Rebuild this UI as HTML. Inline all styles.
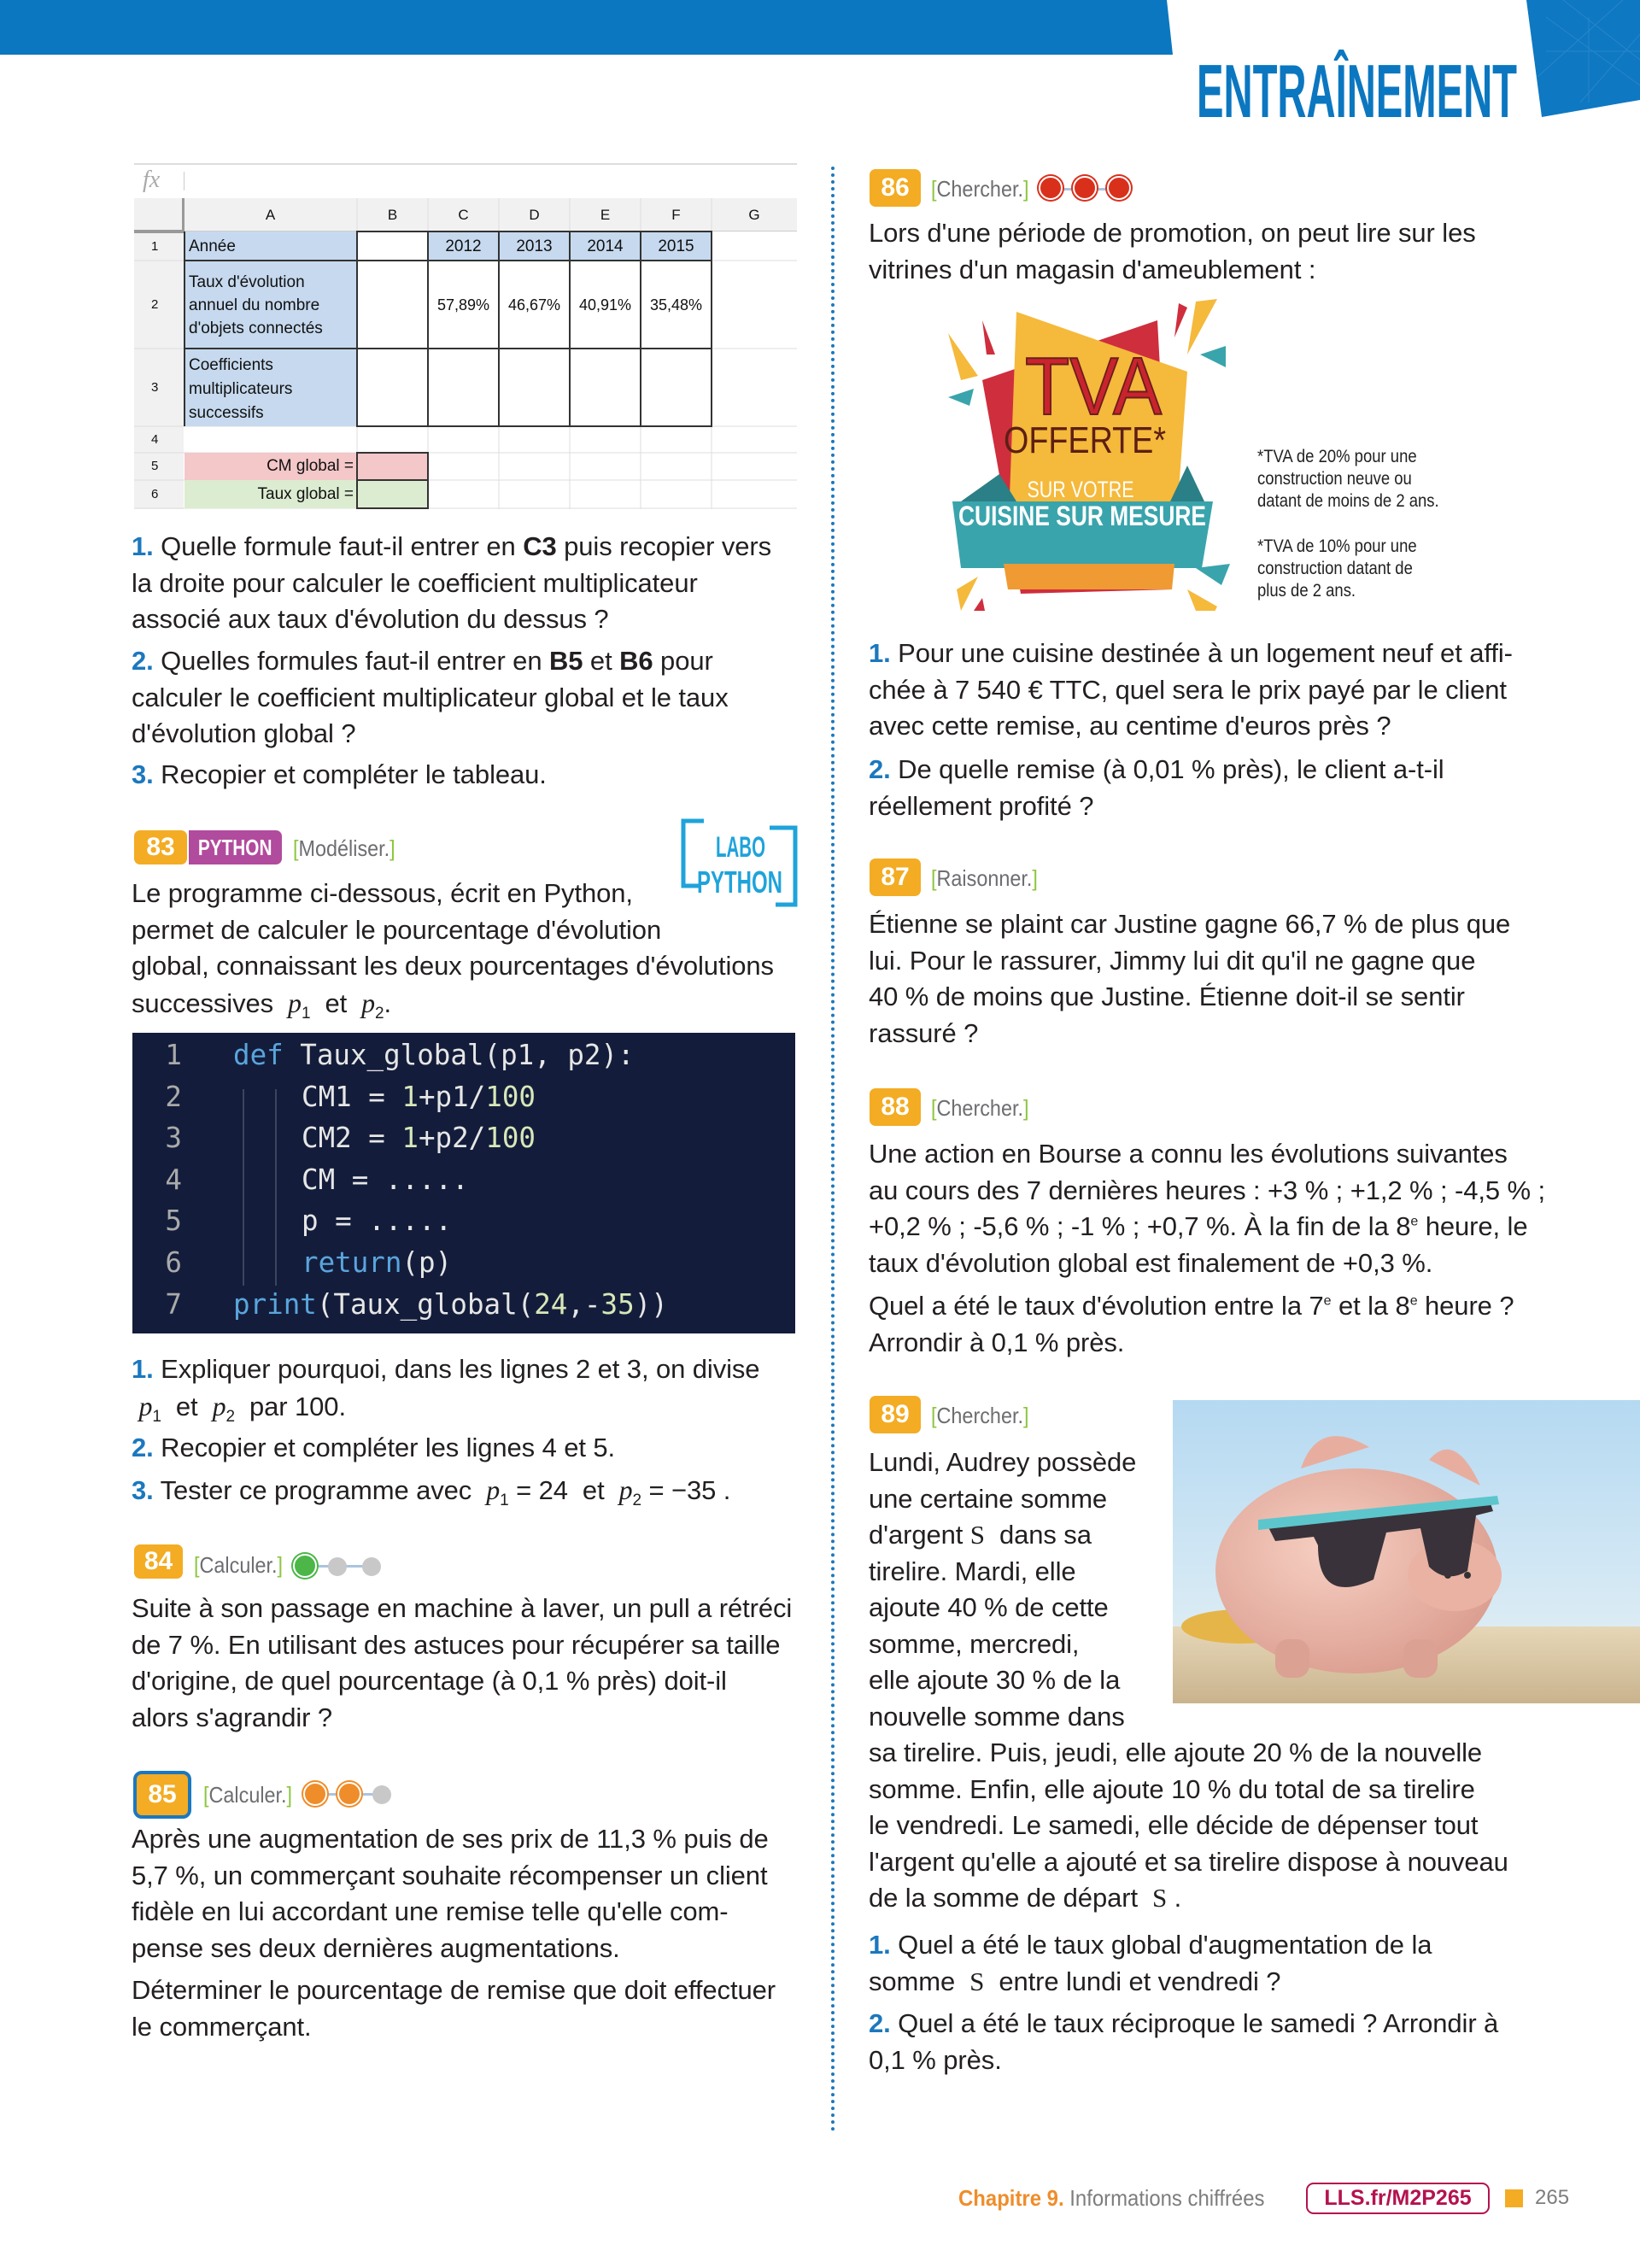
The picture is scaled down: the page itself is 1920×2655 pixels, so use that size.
<!DOCTYPE html>
<html><head><meta charset="utf-8">
<style>
*{margin:0;padding:0;box-sizing:border-box}
body{width:1920px;height:2655px;position:relative;background:#fff;font-family:"Liberation Sans",sans-serif;color:#231f20;overflow:hidden}
.a{position:absolute;white-space:nowrap}
.t{position:absolute;white-space:nowrap;font-size:31px;line-height:42.5px;letter-spacing:-0.1px}
.n{color:#1b78be;font-weight:bold}
.badge{position:absolute;background:#f3ac23;color:#fff;font-weight:bold;font-size:30px;border-radius:7px;text-align:center;line-height:40px;height:40px}
.tag{position:absolute;font-size:26px;color:#6d6e71;transform:scaleX(.9);transform-origin:left center;white-space:nowrap;line-height:30px}
.tag b{color:#8cc63f;font-weight:normal}
.dot{position:absolute;border-radius:50%}
i.m{font-family:"Liberation Serif",serif;font-style:italic;font-size:32px}
sub{font-size:19px}
.cell{position:absolute;font-size:19px;line-height:22px;color:#111}
</style></head><body>

<svg class="a" style="left:0;top:0" width="1920" height="140">
<polygon points="0,0 1366,0 1373,64 0,64" fill="#0b77c0"/>
<polygon points="1787,0 1920,0 1920,117 1805,137" fill="#0e78c2"/>
<g stroke="#3a90cf" stroke-width="1" opacity=".6" fill="none">
<path d="M1810,20 L1920,100 M1830,0 L1920,70 M1800,90 L1900,0 M1850,120 L1920,40 M1860,20 L1860,120 M1810,60 L1920,60"/>
</g>
<text x="1401" y="137" font-family="Liberation Sans" font-weight="bold" font-size="88" fill="#0b77c0" textLength="375" lengthAdjust="spacingAndGlyphs">ENTRAÎNEMENT</text>
</svg>

<div class="a" style="left:973px;top:195px;height:2302px;border-left:4px dotted #1b78be"></div>

<div class="a" style="left:157px;top:191px;width:776px;height:405px;background:#fff">
 <div class="a" style="left:0;top:0;width:776px;height:2px;background:#ddd"></div>
 <div class="a" style="left:10px;top:4px;font-family:'Liberation Serif',serif;font-style:italic;font-size:28px;color:#aaa">fx</div>
 <div class="a" style="left:58px;top:10px;width:1px;height:22px;background:#ccc"></div>
 <div class="a" style="left:0;top:41px;width:776px;height:39px;background:#f1f1f1;border-bottom:1px solid #ccc"></div>
 <div class="a" style="left:0;top:41px;width:58px;height:364px;background:#f1f1f1"></div>
 <div class="a" style="left:0;top:78px;width:58px;height:4px;background:#999"></div>
 <div class="a" style="left:56px;top:41px;width:3px;height:39px;background:#999"></div>
 <div class="cell" style="left:58px;top:50px;width:203px;text-align:center;font-size:17px">A</div>
 <div class="cell" style="left:261px;top:50px;width:83px;text-align:center;font-size:17px">B</div>
 <div class="cell" style="left:344px;top:50px;width:83px;text-align:center;font-size:17px">C</div>
 <div class="cell" style="left:427px;top:50px;width:83px;text-align:center;font-size:17px">D</div>
 <div class="cell" style="left:510px;top:50px;width:83px;text-align:center;font-size:17px">E</div>
 <div class="cell" style="left:593px;top:50px;width:83px;text-align:center;font-size:17px">F</div>
 <div class="cell" style="left:676px;top:50px;width:100px;text-align:center;font-size:17px">G</div>
 <svg class="a" style="left:0;top:0" width="776" height="405">
  <g stroke="#ddd" stroke-width="1">
   <line x1="0" y1="114" x2="776" y2="114"/><line x1="0" y1="217" x2="776" y2="217"/><line x1="0" y1="308" x2="776" y2="308"/><line x1="0" y1="339" x2="776" y2="339"/><line x1="0" y1="371" x2="776" y2="371"/><line x1="0" y1="404" x2="776" y2="404"/>
   <line x1="261" y1="41" x2="261" y2="405"/><line x1="344" y1="41" x2="344" y2="405"/><line x1="427" y1="41" x2="427" y2="405"/><line x1="510" y1="41" x2="510" y2="405"/><line x1="593" y1="41" x2="593" y2="405"/><line x1="676" y1="41" x2="676" y2="405"/>
  </g>
  <rect x="59" y="80" width="202" height="228" fill="#c6d9ee"/>
  <rect x="344" y="80" width="332" height="34" fill="#c6d9ee"/>
  <rect x="59" y="339" width="285" height="32" fill="#f4c7c9"/>
  <rect x="59" y="371" width="285" height="33" fill="#dcecd1"/>
  <g stroke="#333" stroke-width="2" fill="none">
   <rect x="261" y="80" width="415" height="228"/>
   <line x1="59" y1="114" x2="676" y2="114"/><line x1="59" y1="217" x2="676" y2="217"/>
   <line x1="344" y1="80" x2="344" y2="308"/><line x1="427" y1="80" x2="427" y2="308"/><line x1="510" y1="80" x2="510" y2="308"/><line x1="593" y1="80" x2="593" y2="308"/>
   <line x1="59" y1="80" x2="59" y2="308"/>
   <rect x="261" y="339" width="83" height="65"/><line x1="261" y1="371" x2="344" y2="371"/>
  </g>
 </svg>
 <div class="cell" style="left:20px;top:87px;font-size:15px">1</div>
 <div class="cell" style="left:20px;top:155px;font-size:15px">2</div>
 <div class="cell" style="left:20px;top:252px;font-size:15px">3</div>
 <div class="cell" style="left:20px;top:313px;font-size:15px">4</div>
 <div class="cell" style="left:20px;top:344px;font-size:15px">5</div>
 <div class="cell" style="left:20px;top:377px;font-size:15px">6</div>
 <div class="cell" style="left:64px;top:87px">Année</div>
 <div class="cell" style="left:64px;top:126px;line-height:27px">Taux d'évolution<br>annuel du nombre<br>d'objets connectés</div>
 <div class="cell" style="left:64px;top:223px;line-height:28px">Coefficients<br>multiplicateurs<br>successifs</div>
 <div class="cell" style="left:344px;top:87px;width:83px;text-align:center">2012</div>
 <div class="cell" style="left:427px;top:87px;width:83px;text-align:center">2013</div>
 <div class="cell" style="left:510px;top:87px;width:83px;text-align:center">2014</div>
 <div class="cell" style="left:593px;top:87px;width:83px;text-align:center">2015</div>
 <div class="cell" style="left:344px;top:155px;width:83px;text-align:center;font-size:18px">57,89%</div>
 <div class="cell" style="left:427px;top:155px;width:83px;text-align:center;font-size:18px">46,67%</div>
 <div class="cell" style="left:510px;top:155px;width:83px;text-align:center;font-size:18px">40,91%</div>
 <div class="cell" style="left:593px;top:155px;width:83px;text-align:center;font-size:18px">35,48%</div>
 <div class="cell" style="left:59px;top:344px;width:198px;text-align:right">CM global =</div>
 <div class="cell" style="left:59px;top:377px;width:198px;text-align:right">Taux global =</div>
</div>

<div class="t" style="left:154px;top:619px"><span class="n">1.</span> Quelle formule faut-il entrer en <b>C3</b> puis recopier vers<br>la droite pour calculer le coefficient multiplicateur<br>associé aux taux d'évolution du dessus ?</div>
<div class="t" style="left:154px;top:753px"><span class="n">2.</span> Quelles formules faut-il entrer en <b>B5</b> et <b>B6</b> pour<br>calculer le coefficient multiplicateur global et le taux<br>d'évolution global ?</div>
<div class="t" style="left:154px;top:886px"><span class="n">3.</span> Recopier et compléter le tableau.</div>

<div class="badge" style="left:157px;top:972px;width:62px">83</div>
<div class="a" style="left:221px;top:972px;width:109px;height:40px;background:#b14b9d;border-radius:0 7px 7px 0;color:#fff;font-weight:bold;font-size:26px;line-height:40px;text-align:center"><span style="display:inline-block;transform:scaleX(.8)">PYTHON</span></div>
<div class="tag" style="left:343px;top:978px"><b>[</b>Modéliser.<b>]</b></div>
<svg class="a" style="left:796px;top:957px" width="140" height="106">
 <path d="M28,4 H4 V80 H24" fill="none" stroke="#1fa3da" stroke-width="5"/>
 <path d="M105,12 H135 V102 H112" fill="none" stroke="#1fa3da" stroke-width="5"/>
 <text x="71" y="46" text-anchor="middle" font-family="Liberation Sans" font-weight="bold" font-size="34" fill="#1fa3da" textLength="58" lengthAdjust="spacingAndGlyphs">LABO</text>
 <text x="70" y="88" text-anchor="middle" font-family="Liberation Sans" font-weight="bold" font-size="36" fill="#1fa3da" textLength="100" lengthAdjust="spacingAndGlyphs">PYTHON</text>
</svg>
<div class="t" style="left:154px;top:1025px">Le programme ci-dessous, écrit en Python,<br>permet de calculer le pourcentage d'évolution<br>global, connaissant les deux pourcentages d'évolutions<br>successives&nbsp; <i class="m">p</i><sub>1</sub>&nbsp; et&nbsp; <i class="m">p</i><sub>2</sub>.</div>

<div class="a" style="left:155px;top:1209px;width:776px;height:352px;background:#131d3b"></div>
<div class="a" style="left:284px;top:1275px;width:2px;height:230px;background:#3a4560"></div>
<div class="a" style="left:322px;top:1275px;width:2px;height:230px;background:#3a4560"></div>
<div class="a" style="left:155px;top:1209px;font-family:'DejaVu Sans Mono','Liberation Mono',monospace;font-size:32.5px;line-height:48.6px;color:#e6e6e6;padding-top:2px">
<div><span style="display:inline-block;width:58px;text-align:right;color:#aaa">1</span><span style="padding-left:60px"><span style="color:#5aa5dd">def</span> Taux_global(p1, p2):</span></div>
<div><span style="display:inline-block;width:58px;text-align:right;color:#aaa">2</span><span style="padding-left:140px">CM1 = <span style="color:#d8e7b8">1</span>+p1/<span style="color:#d8e7b8">100</span></span></div>
<div><span style="display:inline-block;width:58px;text-align:right;color:#aaa">3</span><span style="padding-left:140px">CM2 = <span style="color:#d8e7b8">1</span>+p2/<span style="color:#d8e7b8">100</span></span></div>
<div><span style="display:inline-block;width:58px;text-align:right;color:#aaa">4</span><span style="padding-left:140px">CM = .....</span></div>
<div><span style="display:inline-block;width:58px;text-align:right;color:#aaa">5</span><span style="padding-left:140px">p = .....</span></div>
<div><span style="display:inline-block;width:58px;text-align:right;color:#aaa">6</span><span style="padding-left:140px"><span style="color:#5aa5dd">return</span>(p)</span></div>
<div><span style="display:inline-block;width:58px;text-align:right;color:#aaa">7</span><span style="padding-left:60px"><span style="color:#5aa5dd">print</span>(Taux_global(<span style="color:#d8e7b8">24</span>,-<span style="color:#d8e7b8">35</span>))</span></div>
</div>

<div class="t" style="left:154px;top:1582px"><span class="n">1.</span> Expliquer pourquoi, dans les lignes 2 et 3, on divise<br>&nbsp;<i class="m">p</i><sub>1</sub>&nbsp; et&nbsp; <i class="m">p</i><sub>2</sub>&nbsp; par 100.</div>
<div class="t" style="left:154px;top:1674px"><span class="n">2.</span> Recopier et compléter les lignes 4 et 5.</div>
<div class="t" style="left:154px;top:1723px"><span class="n">3.</span> Tester ce programme avec&nbsp; <i class="m">p</i><sub>1</sub> = 24&nbsp; et&nbsp; <i class="m">p</i><sub>2</sub> = −35 .</div>

<div class="badge" style="left:157px;top:1808px;width:57px">84</div>
<div class="tag" style="left:227px;top:1817px"><b>[</b>Calculer.<b>]</b></div>
<div class="a" style="left:365px;top:1832px;width:80px;height:3px;background:#aac4de"></div>
<div class="dot" style="left:343px;top:1819px;width:28px;height:28px;background:#4cb648;border:2px solid #fff;box-shadow:0 0 0 2px #4cb648"></div>
<div class="dot" style="left:384px;top:1823px;width:22px;height:22px;background:#c8c8c8"></div>
<div class="dot" style="left:424px;top:1823px;width:22px;height:22px;background:#c8c8c8"></div>
<div class="t" style="left:154px;top:1862px">Suite à son passage en machine à laver, un pull a rétréci<br>de 7 %. En utilisant des astuces pour récupérer sa taille<br>d'origine, de quel pourcentage (à 0,1 % près) doit-il<br>alors s'agrandir ?</div>

<div class="badge" style="left:156px;top:2073px;width:68px;height:56px;line-height:48px;border:4px solid #1b78be;border-radius:10px">85</div>
<div class="tag" style="left:238px;top:2086px"><b>[</b>Calculer.<b>]</b></div>
<div class="a" style="left:375px;top:2099px;width:80px;height:3px;background:#aac4de"></div>
<div class="dot" style="left:355px;top:2086px;width:28px;height:28px;background:#ef8d2a;border:2px solid #fff;box-shadow:0 0 0 2px #ef8d2a"></div>
<div class="dot" style="left:395px;top:2086px;width:28px;height:28px;background:#ef8d2a;border:2px solid #fff;box-shadow:0 0 0 2px #ef8d2a"></div>
<div class="dot" style="left:436px;top:2090px;width:22px;height:22px;background:#c8c8c8"></div>
<div class="t" style="left:154px;top:2132px">Après une augmentation de ses prix de 11,3 % puis de<br>5,7 %, un commerçant souhaite récompenser un client<br>fidèle en lui accordant une remise telle qu'elle com-<br>pense ses deux dernières augmentations.</div>
<div class="t" style="left:154px;top:2309px">Déterminer le pourcentage de remise que doit effectuer<br>le commerçant.</div>

<div class="badge" style="left:1018px;top:198px;width:60px;height:44px;line-height:44px">86</div>
<div class="tag" style="left:1090px;top:206px"><b>[</b>Chercher.<b>]</b></div>
<div class="a" style="left:1230px;top:220px;width:80px;height:3px;background:#aac4de"></div>
<div class="dot" style="left:1216px;top:206px;width:28px;height:28px;background:#d9301c;border:2px solid #fff;box-shadow:0 0 0 2px #d9301c"></div>
<div class="dot" style="left:1256px;top:206px;width:28px;height:28px;background:#d9301c;border:2px solid #fff;box-shadow:0 0 0 2px #d9301c"></div>
<div class="dot" style="left:1296px;top:206px;width:28px;height:28px;background:#d9301c;border:2px solid #fff;box-shadow:0 0 0 2px #d9301c"></div>
<div class="t" style="left:1017px;top:252px">Lors d'une période de promotion, on peut lire sur les<br>vitrines d'un magasin d'ameublement :</div>

<svg class="a" style="left:1110px;top:345px" width="350" height="370">
 <polygon points="40,100 245,30 262,345 85,350" fill="#cf2e3d"/>
 <polygon points="80,20 280,90 265,300 70,290" fill="#f5b93b"/>
 <polygon points="5,242 310,242 297,320 15,320" fill="#3aa4ac"/>
 <polygon points="15,242 60,210 80,242" fill="#2b7f86"/>
 <polygon points="300,242 280,200 260,242" fill="#2b7f86"/>
 <polygon points="65,315 265,315 262,345 70,345" fill="#ef9a32"/>
 <polygon points="0,45 35,95 15,100" fill="#f5b93b"/>
 <polygon points="40,30 55,70 45,70" fill="#cf2e3d"/>
 <polygon points="0,120 30,110 25,130" fill="#3aa4ac"/>
 <polygon points="290,8 315,5 280,70" fill="#f5b93b"/>
 <polygon points="270,10 280,15 265,50" fill="#cf2e3d"/>
 <polygon points="295,70 325,60 325,85" fill="#3aa4ac"/>
 <polygon points="10,345 35,330 15,370" fill="#f5b93b"/>
 <polygon points="40,355 45,380 30,370" fill="#cf2e3d"/>
 <polygon points="280,345 315,365 300,395" fill="#f5b93b"/>
 <polygon points="290,320 330,315 320,340" fill="#3aa4ac"/>
 <text x="170" y="140" text-anchor="middle" font-family="Liberation Sans" font-size="96" fill="#c9242e" stroke="#6b1d1d" stroke-width="2" textLength="160" lengthAdjust="spacingAndGlyphs">TVA</text>
 <text x="160" y="185" text-anchor="middle" font-family="Liberation Sans" font-size="44" fill="#5d1f14" textLength="190" lengthAdjust="spacingAndGlyphs">OFFERTE*</text>
 <text x="155" y="237" text-anchor="middle" font-family="Liberation Sans" font-size="27" fill="#fff" textLength="125" lengthAdjust="spacingAndGlyphs">SUR VOTRE</text>
 <text x="157" y="270" text-anchor="middle" font-family="Liberation Sans" font-weight="bold" font-size="32" fill="#fff" textLength="290" lengthAdjust="spacingAndGlyphs">CUISINE SUR MESURE</text>
</svg>
<div class="a" style="left:1472px;top:522px;font-size:21px;line-height:26px;color:#222;transform:scaleX(.88);transform-origin:left top">*TVA de 20% pour une<br>construction neuve ou<br>datant de moins de 2 ans.</div>
<div class="a" style="left:1472px;top:627px;font-size:21px;line-height:26px;color:#222;transform:scaleX(.88);transform-origin:left top">*TVA de 10% pour une<br>construction datant de<br>plus de 2 ans.</div>

<div class="t" style="left:1017px;top:744px"><span class="n">1.</span> Pour une cuisine destinée à un logement neuf et affi-<br>chée à 7 540 € TTC, quel sera le prix payé par le client<br>avec cette remise, au centime d'euros près ?</div>
<div class="t" style="left:1017px;top:880px"><span class="n">2.</span> De quelle remise (à 0,01 % près), le client a-t-il<br>réellement profité ?</div>

<div class="badge" style="left:1018px;top:1005px;width:60px;height:44px;line-height:44px">87</div>
<div class="tag" style="left:1090px;top:1013px"><b>[</b>Raisonner.<b>]</b></div>
<div class="t" style="left:1017px;top:1061px">Étienne se plaint car Justine gagne 66,7 % de plus que<br>lui. Pour le rassurer, Jimmy lui dit qu'il ne gagne que<br>40 % de moins que Justine. Étienne doit-il se sentir<br>rassuré ?</div>

<div class="badge" style="left:1018px;top:1274px;width:60px;height:44px;line-height:44px">88</div>
<div class="tag" style="left:1090px;top:1282px"><b>[</b>Chercher.<b>]</b></div>
<div class="t" style="left:1017px;top:1330px">Une action en Bourse a connu les évolutions suivantes<br>au cours des 7 dernières heures : +3 % ; +1,2 % ; -4,5 % ;<br>+0,2 % ; -5,6 % ; -1 % ; +0,7 %. À la fin de la 8<sup style="font-size:16px;line-height:0">e</sup> heure, le<br>taux d'évolution global est finalement de +0,3 %.</div>
<div class="t" style="left:1017px;top:1508px">Quel a été le taux d'évolution entre la 7<sup style="font-size:16px;line-height:0">e</sup> et la 8<sup style="font-size:16px;line-height:0">e</sup> heure ?<br>Arrondir à 0,1 % près.</div>

<div class="badge" style="left:1018px;top:1634px;width:60px;height:44px;line-height:44px">89</div>
<div class="tag" style="left:1090px;top:1642px"><b>[</b>Chercher.<b>]</b></div>
<svg class="a" style="left:1373px;top:1639px" width="547" height="355">
 <defs>
  <linearGradient id="sky" x1="0" y1="0" x2="0" y2="1"><stop offset="0" stop-color="#b5d9f2"/><stop offset="1" stop-color="#e8f2f5"/></linearGradient>
  <linearGradient id="sand" x1="0" y1="0" x2="0" y2="1"><stop offset="0" stop-color="#e6d7b8"/><stop offset="1" stop-color="#c9b38d"/></linearGradient>
  <radialGradient id="pig" cx=".4" cy=".4" r=".7"><stop offset="0" stop-color="#f6cfc2"/><stop offset="1" stop-color="#d99a8c"/></radialGradient>
 </defs>
 <rect width="547" height="355" fill="url(#sky)"/>
 <rect y="265" width="547" height="90" fill="url(#sand)"/>
 <ellipse cx="80" cy="265" rx="70" ry="20" fill="#e5b54a"/>
 <ellipse cx="215" cy="200" rx="165" ry="120" fill="url(#pig)"/>
 <path d="M150,80 Q170,20 230,55" fill="#e7aea0"/>
 <path d="M300,70 Q330,35 360,100" fill="#e7aea0"/>
 <ellipse cx="330" cy="205" rx="55" ry="42" fill="#eab2a3"/>
 <circle cx="322" cy="205" r="4" fill="#333"/><circle cx="345" cy="205" r="4" fill="#333"/>
 <rect x="120" y="280" width="40" height="45" rx="15" fill="#dba193"/>
 <rect x="270" y="280" width="40" height="45" rx="15" fill="#dba193"/>
 <path d="M110,145 L370,115 L375,130 L355,135 L345,200 Q320,215 300,195 L290,150 L250,155 L235,210 Q170,240 170,170 L165,160 L120,165 Z" fill="#39323a"/>
 <path d="M100,140 L380,112 L382,122 L100,152 Z" fill="#5cc6cc"/>
</svg>
<div class="t" style="left:1017px;top:1691px">Lundi, Audrey possède<br>une certaine somme<br>d'argent <span style="font-family:'Liberation Serif',serif;font-size:31px">S</span>&nbsp; dans sa<br>tirelire. Mardi, elle<br>ajoute 40 % de cette<br>somme, mercredi,<br>elle ajoute 30 % de la<br>nouvelle somme dans<br>sa tirelire. Puis, jeudi, elle ajoute 20 % de la nouvelle<br>somme. Enfin, elle ajoute 10 % du total de sa tirelire<br>le vendredi. Le samedi, elle décide de dépenser tout<br>l'argent qu'elle a ajouté et sa tirelire dispose à nouveau<br>de la somme de départ&nbsp; <span style="font-family:'Liberation Serif',serif;font-size:31px">S</span> .</div>
<div class="t" style="left:1017px;top:2256px"><span class="n">1.</span> Quel a été le taux global d'augmentation de la<br>somme&nbsp; <span style="font-family:'Liberation Serif',serif;font-size:31px">S</span>&nbsp; entre lundi et vendredi ?</div>
<div class="t" style="left:1017px;top:2348px"><span class="n">2.</span> Quel a été le taux réciproque le samedi ? Arrondir à<br>0,1 % près.</div>

<div class="a" style="left:1122px;top:2558px;font-size:26px;line-height:30px;color:#7d7d7d;transform:scaleX(.92);transform-origin:left top"><b style="color:#ef8d2a">Chapitre 9.</b> Informations chiffrées</div>
<div class="a" style="left:1529px;top:2555px;width:215px;height:37px;border:2px solid #b5124f;border-radius:9px;color:#b5124f;font-weight:bold;font-size:25px;line-height:33px;text-align:center">LLS.fr/M2P265</div>
<div class="a" style="left:1762px;top:2563px;width:21px;height:21px;background:#f3ac23"></div>
<div class="a" style="left:1797px;top:2558px;font-size:24px;line-height:30px;color:#7d7d7d">265</div>
</body></html>
